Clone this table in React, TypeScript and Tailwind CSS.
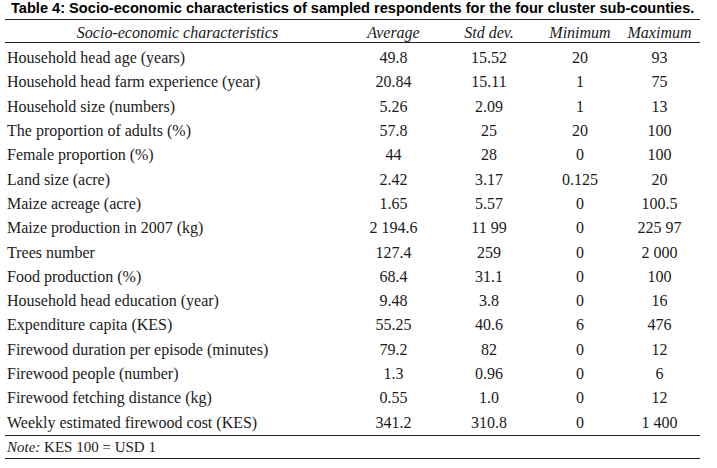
const rows: [string, string, string, string, string][] = [
  ["Household head age (years)", "49.8", "15.52", "20", "93"],
  ["Household head farm experience (year)", "20.84", "15.11", "1", "75"],
  ["Household size (numbers)", "5.26", "2.09", "1", "13"],
  ["The proportion of adults (%)", "57.8", "25", "20", "100"],
  ["Female proportion (%)", "44", "28", "0", "100"],
  ["Land size (acre)", "2.42", "3.17", "0.125", "20"],
  ["Maize acreage (acre)", "1.65", "5.57", "0", "100.5"],
  ["Maize production in 2007 (kg)", "2 194.6", "11 99", "0", "225 97"],
  ["Trees number", "127.4", "259", "0", "2 000"],
  ["Food production (%)", "68.4", "31.1", "0", "100"],
  ["Household head education (year)", "9.48", "3.8", "0", "16"],
  ["Expenditure capita (KES)", "55.25", "40.6", "6", "476"],
  ["Firewood duration per episode (minutes)", "79.2", "82", "0", "12"],
  ["Firewood people (number)", "1.3", "0.96", "0", "6"],
  ["Firewood fetching distance (kg)", "0.55", "1.0", "0", "12"],
  ["Weekly estimated firewood cost (KES)", "341.2", "310.8", "0", "1 400"],
];

const cols = "grid grid-cols-[345px_87px_104px_78px_81px]";

export default function App() {
  return (
    <div className="h-[468px] w-[717px] bg-white text-[#1a1a1a]">
      <h1 className="h-[19px] pl-[11px] font-['Liberation_Sans',Arial,sans-serif] text-[14.6px] font-bold leading-[17px] text-black whitespace-nowrap">
        Table 4: Socio-economic characteristics of sampled respondents for the four cluster sub-counties.
      </h1>
      <div className="ml-[5px] w-[695px] font-['Liberation_Serif','Times_New_Roman',serif] text-[16px]">
        <div className={`${cols} h-[24px] items-center border-y border-[#222] pt-[1px] italic`}>
          <div className="text-center">Socio-economic characteristics</div>
          <div className="text-center">Average</div>
          <div className="text-center">Std dev.</div>
          <div className="text-center">Minimum</div>
          <div className="text-center">Maximum</div>
        </div>
        <div className="pt-[3px]">
          {rows.map((r) => (
            <div key={r[0]} className={`${cols} h-[24.3px] items-center`}>
              <div className="pl-[2px] whitespace-nowrap">{r[0]}</div>
              <div className="text-center">{r[1]}</div>
              <div className="text-center">{r[2]}</div>
              <div className="text-center">{r[3]}</div>
              <div className="text-center">{r[4]}</div>
            </div>
          ))}
        </div>
        <div className="flex h-[24px] items-center border-y border-[#222] pl-[2px] text-[15px]">
          <span className="italic">Note:</span>
          <span>&nbsp;KES 100 = USD 1</span>
        </div>
      </div>
    </div>
  );
}
